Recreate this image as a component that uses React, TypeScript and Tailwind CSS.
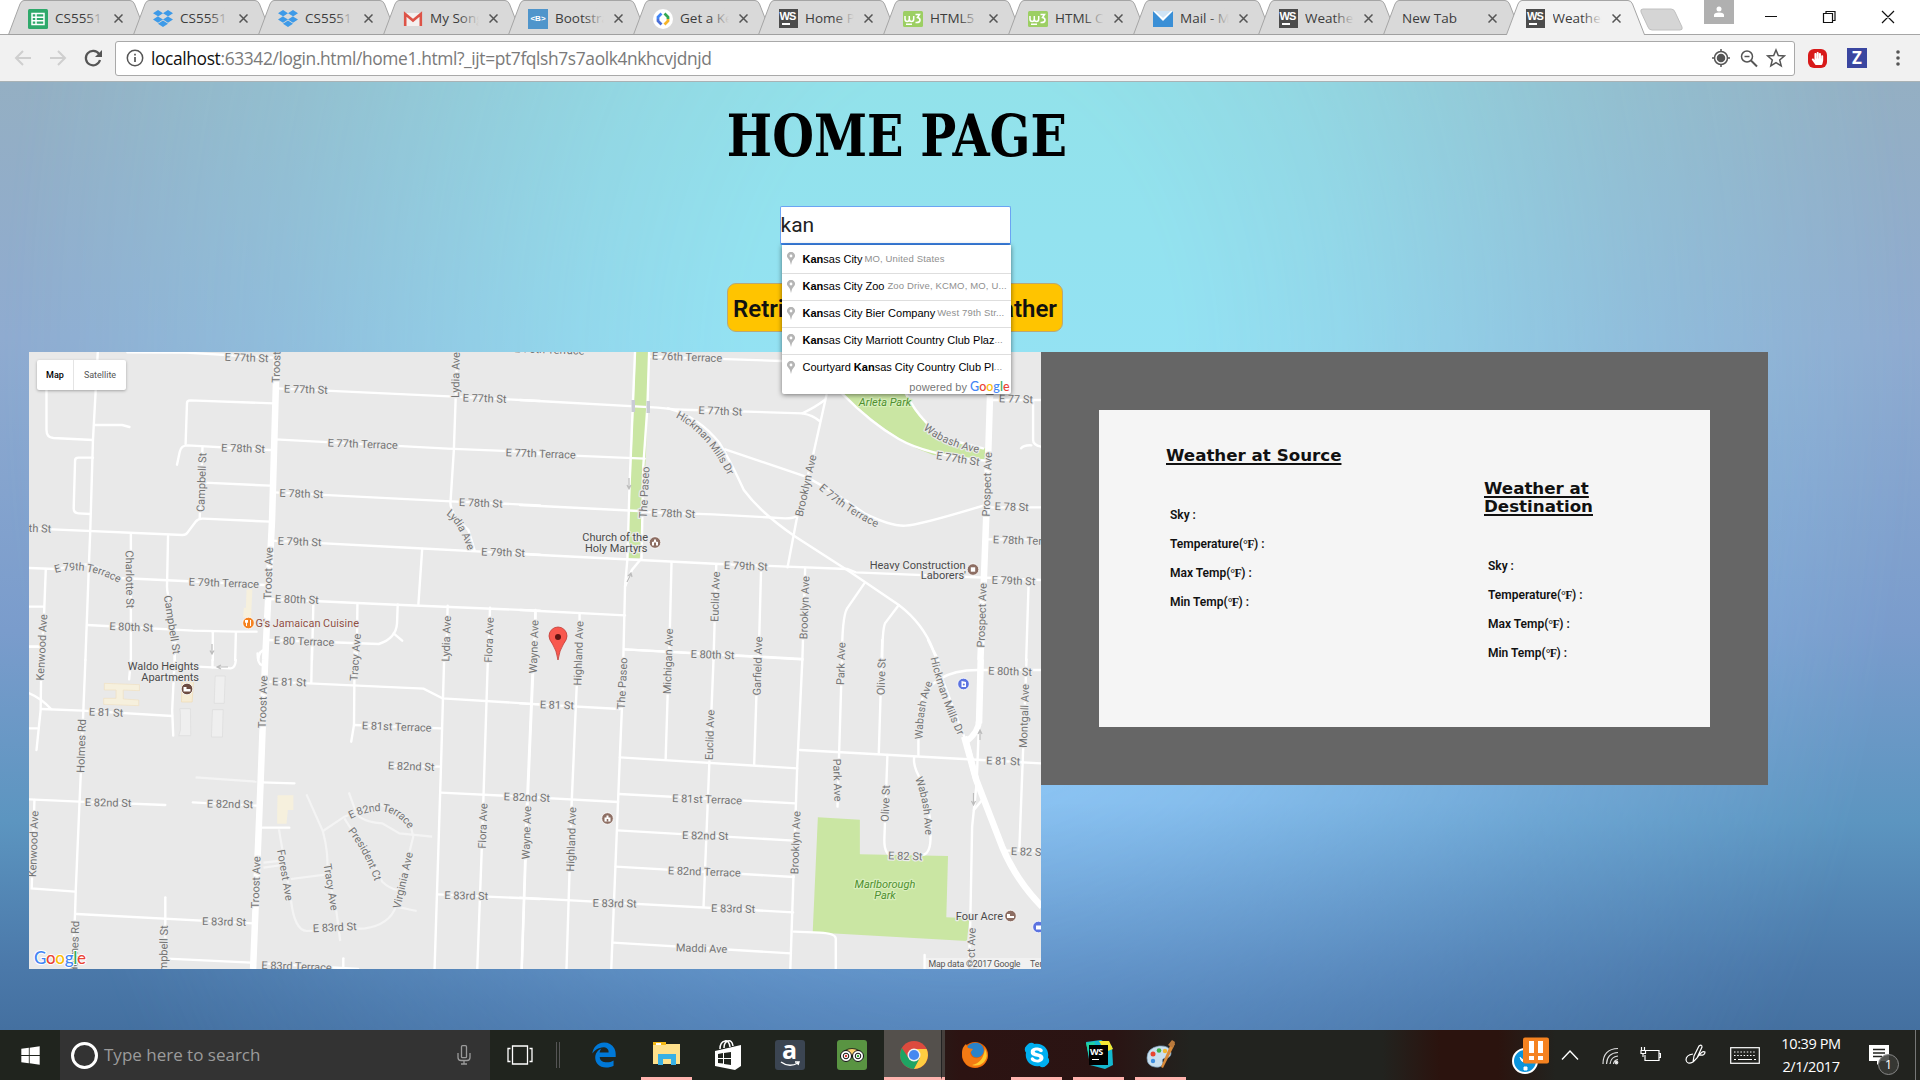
import React from "react";
import { FaDropbox, FaWindows, FaEdgeLegacy, FaSkype, FaHandPaper } from "react-icons/fa";

type P = "A" | "B" | "C" | "D";

/* The map is drawn in four quadrants; each has its own drawing units. */
const ORIGIN: Record<P, [number, number]> = { A: [0, 340], B: [520, 340], C: [0, 640], D: [520, 640] };
const KX = 1 / 2.904;
const KY = 1 / 3;

const roads: Record<P, string[]> = {
  A: [
    "M370,37L540,38L790,53", "M284,36L270,300L262,575L258,680L248,960", "M135,150V270Q135,292 155,294L270,300",
    "M277,255H355L376,261", "M270,353H228Q218,353 218,362L214,505Q214,520 228,520L262,522",
    "M795,190L552,181Q543,181 543,190L539,312", "M514,374L522,335Q526,316 545,316L785,330", "M588,322L580,536",
    "M592,428L785,437", "M85,565L530,585Q540,585 545,577L568,545Q575,535 590,536L785,545", "M380,582V960",
    "M488,588L485,740Q485,760 495,790L508,960", "M85,684L160,687L260,672L350,714L770,735", "M133,687L127,850L118,960",
    "M85,800H127", "M85,920H118", "M253,855L560,872L685,875L745,875", "M618,877V960", "M685,877L683,960",
    "M805,145L1320,170L1568,183", "M800,298L1300,326L1568,337", "M795,457L1310,484L1568,496", "M790,602L1200,624L1568,644",
    "M785,777L1100,792L1568,812", "M1328,36L1318,330L1308,490Q1308,510 1330,540L1360,570L1378,630", "M1226,627L1215,793",
    "M910,793L906,960", "M1038,790L1036,960", "M780,900L1100,912Q1150,895 1153,850L1155,793", "M1143,880L1168,902",
    "M1300,797L1296,960", "M1423,803L1418,960", "M1555,810L1550,960", "M770,930Q752,930 750,960",
  ],
  B: [
    "M334,36L318,440L312,655L305,740L300,960", "M375,36L370,200L358,380L353,655L325,690L305,740",
    "M0,180L400,203Q450,210 500,210L820,220Q860,200 885,180", "M820,220Q850,225 870,243", "M377,50L760,63",
    "M0,340L362,356", "M0,495L345,513", "M353,516L560,523L770,535Q795,535 805,528", "M0,642L580,672L950,687L975,697L1513,720",
    "M430,205Q520,230 580,310Q610,360 650,450Q700,520 800,590L960,697L1100,795Q1170,850 1200,930L1215,960",
    "M596,328L830,410Q920,460 1000,520Q1080,560 1120,557Q1160,555 1345,497", "M890,165L850,350L803,540L777,682",
    "M935,160Q1020,250 1100,297Q1180,345 1350,362", "M1120,160Q1170,260 1250,300L1345,325", "M1370,180H1513",
    "M1490,185V300Q1490,315 1513,320", "M1455,325Q1462,315 1485,316", "M1355,502H1513", "M1350,598H1513",
    "M1477,730L1470,960", "M440,668L433,960", "M570,675L562,960", "M700,690L693,960", "M828,686L820,960",
    "M0,810L305,826", "M45,816V850", "M173,822V850", "M305,928L820,957", "M1000,730L950,805Q935,830 935,960",
    "M1100,795L1060,850Q1052,870 1052,960",
  ],
  C: [
    "M120,60L118,210L106,330", "M85,160Q120,175 148,207", "M85,265H108", "M120,207L240,212L500,228", "M85,20H115",
    "M248,60L235,390L220,750L218,820L210,987", "M380,60L375,118", "M510,0L500,210L503,287", "M617,60V82",
    "M685,60Q683,85 670,85L575,80", "M748,40Q748,72 760,75", "M85,478L230,485L480,495", "M100,480L92,745L218,755",
    "M560,487L745,497", "M760,427L855,430", "M755,563L840,563", "M223,822L735,850", "M480,772V987", "M470,955L730,968",
    "M785,125L1230,146L1285,175L1568,193", "M906,20L904,128", "M1030,20L1028,255L1020,305", "M1028,255L1280,265",
    "M1130,377L1280,380", "M1290,50L1280,400L1262,987", "M1417,50L1400,600L1386,987", "M1548,60L1530,500L1515,987",
    "M1280,458L1568,472", "M1270,763L1568,777", "M765,970L1040,987", "M997,955V987",
  ],
  D: [
    "M820,58L805,380L785,987", "M302,58L290,350L265,987", "M303,28L815,58", "M0,190L290,207", "M290,352L805,385",
    "M288,462L800,490", "M0,470L285,486", "M283,571L795,602", "M278,680L795,711", "M0,773L793,817", "M270,908L787,940",
    "M795,875L870,878Q915,880 917,895V987", "M40,50L22,490L5,987", "M168,60L150,490L135,987", "M432,58L423,357",
    "M562,58L533,800", "M690,58L680,375", "M935,58L922,500", "M1052,0L1042,338", "M1185,0Q1215,60 1220,100L1290,290",
    "M813,330L1513,370", "M1067,345L1058,600Q1058,645 1080,645", "M1157,345V300L1160,200Q1190,90 1330,90H1513",
    "M1145,350Q1140,380 1165,420Q1195,500 1192,600Q1190,645 1165,645", "M1471,58L1450,630", "M1415,632H1513",
    "M1333,250L1326,430L1313,560L1307,880L1303,987", "M1318,510L1342,480", "M1175,945V987",
  ],
};

const mains: Record<P, [string, number][]> = {
  A: [["M804,36L790,540L770,960", 6.5]],
  B: [["M1365,165L1355,500L1347,720L1337,960", 6.5]],
  C: [["M770,60L757,420L735,987", 6.5]],
  D: [
    ["M1338,58L1333,250", 6.5],
    ["M1333,240Q1333,275 1296,305L1325,420", 6],
    ["M1290,290L1325,420L1400,620Q1440,720 1516,800", 6.5],
  ],
};

const soft = [
  "M568,412L745,425", "M810,568L822,640L845,780Q855,870 890,873L1060,865Q1130,855 1150,800L1200,590Q1190,540 1180,530",
  "M890,463L938,575Q955,640 950,700L975,800L988,903", "M938,573L1000,530L1100,490L1190,540",
  "M1013,457L1035,520Q1050,545 1110,550L1160,580L1255,590", "M1000,535L1090,680L1110,725Q1130,745 1155,750",
  "M845,717L950,703", "M765,668L820,662", "M765,683L820,675", "M1150,800L1210,813",
];

type L = [P, number, number, string, number];
const labels: L[] = [
  ["A", 716, 53, "E 77th St", 2], ["A", 803, 50, "Troost Ave", -88], ["A", 888, 148, "E 77th St", 2], ["A", 1323, 105, "Lydia Ave", -89],
  ["A", 1407, 175, "E 77th St", 2], ["A", 706, 325, "E 78th St", 2], ["A", 1053, 312, "E 77th Terrace", 2],
  ["A", 585, 427, "Campbell St", -88], ["A", 875, 461, "E 78th St", 2], ["A", 1396, 489, "E 78th St", 2],
  ["A", 85, 564, "E 79th St", 2], ["A", 870, 605, "E 79th St", 2], ["A", 1461, 637, "E 79th St", 2],
  ["A", 377, 718, "Charlotte St", 89], ["A", 779, 700, "Troost Ave", -88], ["A", 650, 729, "E 79th Terrace", 2],
  ["A", 862, 778, "E 80th St", 2], ["A", 381, 861, "E 80th St", 2], ["A", 500, 854, "Campbell St", 81],
  ["A", 883, 904, "E 80 Terrace", 2], ["C", 121, 22, "Kenwood Ave", -87], ["C", 1032, 52, "Tracy Ave", -86],
  ["C", 1296, -4, "Lydia Ave", -88], ["C", 1420, 0, "Flora Ave", -88], ["D", 40, 20, "Wayne Ave", -88], ["D", 170, 40, "Highland Ave", -88],
  ["B", 485, 51, "E 76th Terrace", 2], ["B", 85, 29, "E 76th Terrace", 2], ["B", 582, 213, "E 77th St", 2],
  ["B", 60, 341, "E 77th Terrace", 2], ["B", 361, 457, "The Paseo", -87], ["B", 445, 520, "E 78th St", 2],
  ["B", 830, 437, "Brooklyn Ave", -77], ["B", 1356, 433, "Prospect Ave", -88], ["B", 1366, 102, "Prospect", -88],
  ["B", 1428, 500, "E 78 St", 2], ["B", 1450, 601, "E 78th Terr", 2], ["B", 1272, 356, "E 77th St", 9], ["B", 1440, 177, "E 77 St", 2],
  ["B", 656, 678, "E 79th St", 2], ["B", 1433, 722, "E 79th St", 2], ["B", 567, 770, "Euclid Ave", -88],
  ["B", 826, 803, "Brooklyn Ave", -88], ["B", 1341, 826, "Prospect Ave", -88], ["D", 559, 44, "E 80th St", 2],
  ["D", 430, 64, "Michigan Ave", -88], ["D", 690, 78, "Garfield Ave", -88], ["D", 297, 130, "The Paseo", -87],
  ["D", 932, 71, "Park Ave", -88], ["D", 1049, 110, "Olive St", -88], ["D", 1423, 94, "E 80th St", 2],
  ["C", 840, 126, "E 81 St", 2], ["C", 308, 217, "E 81 St", 2], ["C", 763, 186, "Troost Ave", -88],
  ["C", 236, 318, "Holmes Rd", -88], ["C", 1152, 260, "E 81st Terrace", 2], ["C", 1194, 379, "E 82nd St", 2],
  ["C", 314, 488, "E 82nd St", 1], ["C", 668, 492, "E 82nd St", 1], ["C", 1530, 472, "E 82nd St", 2],
  ["C", 97, 612, "Kenwood Ave", -88], ["C", 1402, 558, "Flora Ave", -88], ["C", 1529, 578, "Wayne Ave", -88],
  ["C", 743, 727, "Troost Ave", -88], ["C", 828, 705, "Forest Ave", 80], ["C", 961, 741, "Tracy Ave", 81],
  ["C", 1170, 721, "Virginia Ave", -77], ["C", 1354, 767, "E 83rd St", 1], ["C", 651, 845, "E 83rd St", 1],
  ["C", 972, 862, "E 83rd St", -3], ["C", 216, 923, "Holmes Rd", -88], ["C", 475, 945, "Campbell St", -89],
  ["C", 861, 979, "E 83rd Terrace", 2], ["D", 107, 195, "E 81 St", 2], ["D", 551, 285, "Euclid Ave", -88],
  ["D", 543, 478, "E 81st Terrace", 2], ["D", 538, 587, "E 82nd St", 1], ["D", 149, 598, "Highland Ave", -88],
  ["D", 800, 608, "Brooklyn Ave", -88], ["D", 535, 695, "E 82nd Terrace", 2], ["D", 275, 790, "E 83rd St", 1],
  ["D", 619, 806, "E 83rd St", 1], ["D", 527, 925, "Maddi Ave", 2], ["D", 922, 420, "Park Ave", 88],
  ["D", 1061, 490, "Olive St", -88], ["D", 1464, 228, "Montgall Ave", -88], ["D", 1403, 363, "E 81 St", 2],
  ["D", 1119, 648, "E 82 St", 2], ["D", 1475, 635, "E 82 St", 2], ["D", 1309, 960, "Prospect Ave", -88],
];

const curved: [P, string, string][] = [
  ["A", "M158,688Q255,660 360,725", "E 79th Terrace"],
  ["A", "M1302,515Q1345,545 1372,640", "Lydia Ave"],
  ["B", "M457,222Q550,270 618,410", "Hickman Mills Dr"],
  ["B", "M874,438Q950,510 1056,560", "E 77th Terrace"],
  ["B", "M1178,258Q1235,310 1345,330", "Wabash Ave"],
  ["D", "M1203,52Q1228,170 1290,300", "Hickman Mills Dr"],
  ["D", "M1158,298Q1158,190 1192,115", "Wabash Ave"],
  ["D", "M1157,412Q1190,490 1186,600", "Wabash Ave"],
  ["C", "M1013,527Q1140,462 1200,568", "E 82nd Terrace"],
  ["C", "M1018,566Q1070,630 1100,725", "President Ct"],
];

const GOOGLE = [["G", "#4285f4"], ["o", "#ea4335"], ["o", "#fbbc05"], ["g", "#4285f4"], ["l", "#34a853"], ["e", "#ea4335"]];

function pt(p: P, x: number, y: number): [number, number] {
  return [ORIGIN[p][0] + x * KX, ORIGIN[p][1] + y * KY];
}

function Quad({ p, children }: { p: P; children: React.ReactNode }) {
  return <g transform={`translate(${ORIGIN[p][0]} ${ORIGIN[p][1]}) scale(${KX} ${KY})`}>{children}</g>;
}

function Poi({ x, y, color, children }: { x: number; y: number; color: string; children?: React.ReactNode }) {
  return (
    <g transform={`translate(${x} ${y})`}>
      <circle r="5.8" fill={color} stroke="#fff" strokeWidth="0.8" />
      {children ?? <path d="M-2.5,2.5V-1.5H2.5V2.5Z" fill="#fff" />}
    </g>
  );
}

function MapView() {
  const quads: P[] = ["A", "B", "C", "D"];
  const ns = { vectorEffect: "non-scaling-stroke" as const };
  const halo = { stroke: "#ebebeb", strokeWidth: 2.4, paintOrder: "stroke" as const, strokeLinejoin: "round" as const };
  return (
    <svg className="block h-[617px] w-[1012px] bg-[#e9e9e9] font-[Roboto,sans-serif]" viewBox="29 352 1012 617">
      <Quad p="B">
        <path d="M337,30L373,30L366,340L354,560L348,655L312,655Z" fill="#cae6a3" />
        <path d="M935,160Q1050,270 1150,325L1200,345L1352,358V325L1240,300Q1150,240 1120,160Z" fill="#cae6a3" />
      </Quad>
      <Quad p="D">
        <path d="M865,532L987,539V643L1243,648L1238,832L1305,835L1298,903L850,877Z" fill="#cae6a3" />
      </Quad>
      <Quad p="A">
        <path d="M716,748H733L729,832H706L708,803H714Z" fill="#f6f0dd" />
      </Quad>
      <Quad p="C">
        <path d="M303,130L405,134V152L358,150V177L403,180V197L301,193V175H337V150H303Z" fill="#f6f0dd" stroke="#f0e0c0" strokeWidth="2" />
        <path d="M528,125H562L558,186H527Z" fill="#f6ecd5" stroke="#f0dcb4" strokeWidth="2" />
        <path d="M806,466H852V510H836L832,551H805V510Z" fill="#f6f0dd" />
        <path d="M625,108H654L651,190H622ZM617,209H648L646,291H614ZM522,206H553L554,287H519L524,270V220Z" fill="#efefef" stroke="#dcdcdc" strokeWidth="2" />
        {soft.map((d) => <path key={d} d={d} fill="none" stroke="#f4f4f4" strokeWidth="2.2" {...ns} />)}
      </Quad>
      {quads.map((p) => (
        <Quad key={p} p={p}>
          {roads[p].map((d) => <path key={d} d={d} fill="none" stroke="#fff" strokeWidth="2.4" strokeLinecap="round" {...ns} />)}
          {mains[p].map(([d, w]) => <path key={d} d={d} fill="none" stroke="#fff" strokeWidth={w} {...ns} />)}
        </Quad>
      ))}
      <g fill="#c9cbd6">
        <rect x="631.5" y="400" width="3.5" height="12" /><rect x="646.5" y="401" width="3.5" height="12" />
      </g>
      <g stroke="#bcbcbc" strokeWidth="1.2" fill="none">
        <path d="M212,644V653M210,650.500L212,654L214,650.500M228,667H218M221,665L217,667L221,669" />
        <path d="M629,478V488M627,485L629,489L631,485M627,582L631,574M628,576L631,573L632,577" />
        <path d="M980,740V731M978,734L980,730L982,734M973.500,793V804M971.500,801L973.500,805L975.500,801" />
      </g>
      <g fontSize="11" fill="#747474">
        {labels.map(([p, x, y, t, a], i) => {
          const [cx, cy] = pt(p, x, y);
          return <text key={i} transform={`translate(${cx} ${cy}) rotate(${a})`} textAnchor="middle" dy="3.8" {...halo}>{t}</text>;
        })}
        {curved.map(([p, d, t], i) => {
          const abs = d.replace(/([\d.]+),([\d.]+)/g, (_, a, b) => pt(p, Number(a), Number(b)).map((n) => n.toFixed(1)).join(","));
          return (
            <g key={i}>
              <path id={`curve${i}`} d={abs} fill="none" />
              <text dy="3.8" fontSize="10.8" {...halo}><textPath href={`#curve${i}`}>{t}</textPath></text>
            </g>
          );
        })}
      </g>
      <g fontSize="11" fill="#4b4b4b" {...halo}>
        <text x="648" y="540.500" textAnchor="end">Church of the</text>
        <text x="647.500" y="552" textAnchor="end">Holy Martyrs</text>
        <text x="965.500" y="568.500" textAnchor="end">Heavy Construction</text>
        <text x="966" y="579" textAnchor="end">Laborers'</text>
        <text x="199" y="669.500" textAnchor="end">Waldo Heights</text>
        <text x="199" y="680.500" textAnchor="end">Apartments</text>
        <text x="1003" y="919.500" textAnchor="end">Four Acre</text>
        <text x="255.500" y="627" fill="#8f4f44" textLength="103.500">G's Jamaican Cuisine</text>
        <g fill="#4f8f2f" fontStyle="italic" stroke="#d9efbd">
          <text x="885" y="406" textAnchor="middle">Arleta Park</text>
          <text x="885" y="887.500" textAnchor="middle">Marlborough</text>
          <text x="885" y="898.500" textAnchor="middle">Park</text>
        </g>
      </g>
      <Poi x={248.500} y={623} color="#f58220"><path d="M-2,-3V3M2,-3V3M-3,-3V-0.500H-1V-3" stroke="#fff" fill="none" /></Poi>
      <Poi x={655} y={542.500} color="#8d6e63"><path d="M-3,3V-0.500L-1,-1V-3H1V-1L3,-0.500V3H1V0H-1V3Z" fill="#fff" /></Poi>
      <Poi x={973} y={569.500} color="#8d6e63"><path d="M-2.200,-2.200H2.200V2.200H-2.200Z" fill="#fff" /></Poi>
      <Poi x={187} y={689} color="#6d4c41"><path d="M-3.500,2.500V-2H-0.500V0H3.500V2.500Z" fill="#fff" /></Poi>
      <Poi x={607.500} y={818.500} color="#8d6e63"><path d="M-3,3V-1H-1V-3H1V-1H3V3Z" fill="#fff" /><path d="M-0.800,3V0.500H0.800V3Z" fill="#8d6e63" /></Poi>
      <Poi x={1010.500} y={916} color="#8d6e63"><path d="M-3.500,2V-2H-0.500V0H3.500V2Z" fill="#fff" /></Poi>
      <Poi x={963.500} y={684} color="#5c73e0"><path d="M-2,3V-3L2.500,-2V3Z" fill="#fff" /><circle cx="0.300" cy="0.500" r="1" fill="#5c73e0" /></Poi>
      <Poi x={1038.500} y={927} color="#5c73e0" />
      <g>
        <path d="M558,660Q556.500,650 552.500,644Q549,639.500 549,636A9,9 0 0 1 567,636Q567,639.500 563.500,644Q559.500,650 558,660Z" fill="#f8584e" stroke="#c23a34" strokeWidth="0.8" />
        <circle cx="558" cy="637" r="3" fill="#5f1411" />
      </g>
      <text x="34" y="963.500" fontSize="17" fontFamily="Lato" stroke="#fff" strokeWidth="2" paintOrder="stroke" textLength="52">
        {GOOGLE.map(([c, f], i) => <tspan key={i} fill={f} fontWeight="500">{c}</tspan>)}
      </text>
      <rect x="926" y="958" width="115" height="11" fill="#f3f3f3" opacity="0.8" />
      <g fontSize="8.800" fill="#555">
        <text x="928.500" y="966.500" textLength="92">Map data ©2017 Google</text>
        <text x="1030" y="966.500">Terms</text>
      </g>
    </svg>
  );
}

function GoogleWord({ className }: { className: string }) {
  return <span className={className}>{GOOGLE.map(([c, f], i) => <span key={i} style={{ color: f }}>{c}</span>)}</span>;
}

function Favicon({ kind }: { kind: string }) {
  if (kind === "sheet")
    return (
      <svg className="h-5 w-5" viewBox="0 0 20 20"><rect width="20" height="20" rx="1.500" fill="#2fa96b" /><path d="M4,4.500H16V15.500H4ZM4,8.200H16M4,11.800H16M8,4.500V15.500" stroke="#fff" strokeWidth="1.500" fill="none" /></svg>
    );
  if (kind === "dropbox") return <FaDropbox className="h-[21px] w-[21px] text-[#3d9ae8]" />;
  if (kind === "gmail")
    return (
      <svg className="h-5 w-5" viewBox="0 0 20 20"><path d="M1,4H19V17H1Z" fill="#f4f0ef" /><path d="M2.200,17V5L10,11.500L17.800,5V17" fill="none" stroke="#dd5347" strokeWidth="2.600" /></svg>
    );
  if (kind === "boot")
    return <span className="flex h-5 w-5 items-center justify-center bg-[#4f95cb] font-['Liberation_Sans',sans-serif] text-[8px] font-bold text-white">&lt;B&gt;</span>;
  if (kind === "dev")
    return (
      <svg className="h-5 w-5" viewBox="0 0 20 20"><circle cx="10" cy="10" r="10" fill="#fff" /><g fill="none" strokeWidth="2.800"><path d="M8.500,4.500L5,8V10" stroke="#4285f4" /><path d="M5,10V12L8.500,15.500" stroke="#4a6fd8" /><path d="M11.500,4.500L15,8V10" stroke="#34a853" /><path d="M15,10V12L11.500,15.500" stroke="#f7b529" /></g></svg>
    );
  if (kind === "ws")
    return (
      <span className="flex h-[19px] w-[19px] flex-col bg-[#4c4c4c] pl-px pt-px font-['Liberation_Sans',sans-serif] text-[11px] font-bold leading-[12px] tracking-[-1px] text-white">
        WS<span className="ml-0.5 mt-px h-0.5 w-2 bg-white" />
      </span>
    );
  if (kind === "w3")
    return (
      <svg className="h-4 w-5" viewBox="0 0 20 16"><rect width="20" height="16" rx="1.500" fill="#9ccf63" /><path d="M2,5V8Q2,10.500 4.200,10.500Q6.300,10.500 6.300,8V5M6.300,8Q6.300,10.500 8.500,10.500Q10.700,10.500 10.700,8V5M12.500,3.500H16.500L14.500,6.500Q17.300,7 17,9.500Q16.500,12 12.500,11.500M3,13.300H9" fill="none" stroke="#fff" strokeWidth="1.500" /></svg>
    );
  if (kind === "mail")
    return <svg className="h-4 w-5" viewBox="0 0 20 16"><rect width="20" height="16" fill="#3a8fd6" /><path d="M0,0L10,10L20,0Z" fill="#fff" /><path d="M2,0L10,7L18,0Z" fill="#3a8fd6" opacity=".25" /></svg>;
  return null;
}

const tabs: [string, string][] = [
  ["sheet", "CS5551"], ["dropbox", "CS5551"], ["dropbox", "CS5551"], ["gmail", "My Song"], ["boot", "Bootstra"], ["dev", "Get a Key"],
  ["ws", "Home P"], ["w3", "HTML5 "], ["w3", "HTML Co"], ["mail", "Mail - M"], ["ws", "Weather"], ["", "New Tab"], ["ws", "Weather"],
];

function Tab({ kind, title, active }: { kind: string; title: string; active: boolean }) {
  const fill = active ? "#f1f1f1" : "#d9d9d9";
  const fade = active ? "to-[#f1f1f1]" : "to-[#d9d9d9]";
  return (
    <div className={kind ? "relative -mr-[15px] flex h-[35px] w-[140px] shrink-0 items-center pl-[20px]" : "relative -mr-[17.500px] flex h-[35px] w-[140px] shrink-0 items-center pl-[19px]"}>
      <svg className="absolute inset-0 h-full w-full" viewBox="0 0 140 35">
        <path d="M0,36L12,4Q13.500,0.500 16,0.500H122Q125,0.500 126.500,4L139,36" fill={fill} stroke="#a5a5a5" />
        {!active && <path d="M0,34.500H140" stroke="#a0a0a0" />}
      </svg>
      <div className="relative flex h-full w-full items-center pt-[2px]">
        {kind && <span className="mr-[7px] flex w-5 justify-center"><Favicon kind={kind} /></span>}
        <span className={kind ? "relative w-[49px] overflow-hidden whitespace-nowrap text-[13.5px] text-[#3c3c3c]" : "w-[76px] whitespace-nowrap text-[13.5px] text-[#3c3c3c]"}>
          {title}
          {kind && <span className={`absolute inset-y-0 right-0 w-5 bg-linear-to-r from-transparent ${fade}`} />}
        </span>
        <svg className="ml-[10px] h-[9px] w-[9px]" viewBox="0 0 9 9"><path d="M0.500,0.500L8.500,8.500M8.500,0.500L0.500,8.500" stroke="#555" strokeWidth="1.500" /></svg>
      </div>
    </div>
  );
}

function Browser() {
  return (
    <header className="font-['Open_Sans',sans-serif]">
      <div className="flex h-[35px] border-b border-[#a6a6a6] bg-white pl-[8px]">
        {tabs.map(([k, t], i) => <Tab key={i} kind={k} title={t} active={i === 12} />)}
        <svg className="ml-[9px] mt-[8px] h-[23px] w-[44px] shrink-0" viewBox="0 0 44 23"><path d="M3,1H31Q34,1 35,4L42,19Q43,22 40,22H12Q9,22 8,19L1,4Q0,1 3,1Z" fill="#d5d5d5" stroke="#c0c0c0" /></svg>
        <div className="ml-[20px] flex h-[24px] w-[30px] shrink-0 items-center justify-center bg-[#b0b0b0]">
          <svg className="h-3 w-3" viewBox="0 0 12 12"><circle cx="6" cy="3" r="2.500" fill="#fff" /><path d="M1,11V9Q1,6.500 6,6.500Q11,6.500 11,9V11Z" fill="#fff" /></svg>
        </div>
        <svg className="ml-[30px] h-[34px] w-[140px] shrink-0" viewBox="0 0 140 34" fill="none" stroke="#111" strokeWidth="1.200">
          <path d="M1,16.500H13M59.500,13.500H68.500V22.500H59.500ZM62,13.500V11.500H71V20.500H68.500M118,11L130,23M130,11L118,23" />
        </svg>
      </div>
      <div className="flex h-[47px] items-center border-b border-[#a9b2b5] bg-[#f1f1f1] pl-[14px]">
        <svg className="h-[24px] w-[90px]" viewBox="0 0 90 24" fill="none" strokeWidth="2">
          <path d="M17,12H2M9,5L2,12L9,19M36,12H51M44,5L51,12L44,19" stroke="#cfcfcf" />
          <path d="M85,8A7.200,7.200 0 1 0 86,14" stroke="#555" strokeWidth="2.200" /><path d="M88,4V11H81Z" fill="#555" />
        </svg>
        <div className="ml-[11px] flex h-[35px] w-[1680px] items-center rounded-[3px] border border-[#a9a9a9] bg-white pl-[10px] pr-[8px]">
          <svg className="h-[18px] w-[18px]" viewBox="0 0 18 18"><circle cx="9" cy="9" r="7.700" fill="none" stroke="#555" strokeWidth="1.500" /><path d="M9,8V13M9,4.800V6.500" stroke="#555" strokeWidth="1.700" /></svg>
          <span className="ml-[7px] whitespace-nowrap text-[17.400px] tracking-[-0.380px] text-[#7a7a7a]"><span className="text-[#111]">localhost</span>:63342/login.html/home1.html?_ijt=pt7fqlsh7s7aolk4nkhcvjdnjd</span>
          <svg className="ml-auto h-[22px] w-[76px]" viewBox="0 0 76 22" fill="none" stroke="#555" strokeWidth="1.500">
            <circle cx="11" cy="11" r="6.500" /><circle cx="11" cy="11" r="3.500" fill="#555" /><path d="M11,2V5M11,17V20M2,11H5M17,11H20" />
            <circle cx="37" cy="9.500" r="5.500" /><path d="M41,13.500L47,19.500" strokeWidth="2" /><path d="M34.500,9.500H39.500" />
            <path d="M66,3L68.300,8.600L74.300,9L69.700,12.900L71.200,18.800L66,15.600L60.800,18.800L62.300,12.900L57.700,9L63.700,8.600Z" />
          </svg>
        </div>
        <span className="ml-[13px] flex h-[19px] w-[19px] items-center justify-center rounded-[6px] bg-[#d81a1a]"><FaHandPaper className="h-[13px] w-[13px] text-white" /></span>
        <span className="ml-[20px] flex h-[20px] w-[20px] items-center justify-center bg-[#3a46a0] text-[17px] font-bold text-white">Z</span>
        <svg className="ml-[28px] h-[18px] w-[6px]" viewBox="0 0 6 18" fill="#555"><circle cx="3" cy="3" r="1.800" /><circle cx="3" cy="9" r="1.800" /><circle cx="3" cy="15" r="1.800" /></svg>
      </div>
    </header>
  );
}

const suggestions: { pre?: string; bold: string; rest: string; minor: string; gap: string }[] = [
  { bold: "Kan", rest: "sas City", minor: "MO, United States", gap: "ml-[2px]" },
  { bold: "Kan", rest: "sas City Zoo", minor: "Zoo Drive, KCMO, MO, U...", gap: "ml-[3px]" },
  { bold: "Kan", rest: "sas City Bier Company", minor: "West 79th Str...", gap: "ml-[2px]" },
  { bold: "Kan", rest: "sas City Marriott Country Club Plaz", minor: "...", gap: "" },
  { pre: "Courtyard ", bold: "Kan", rest: "sas City Country Club Pl", minor: "...", gap: "" },
];

function Suggestions() {
  return (
    <div className="absolute left-[1px] top-[38px] z-10 h-[149px] w-[229px] overflow-hidden rounded-b-[2px] bg-white font-['Liberation_Sans',sans-serif] shadow-[0_1px_5px_rgba(0,0,0,0.5)]">
      {suggestions.map((s, i) => (
        <div key={i} className={i ? "flex h-[27px] items-center whitespace-nowrap border-t border-[#dedede] pl-[5px] text-[11px] text-black" : "flex h-[27.500px] items-center whitespace-nowrap pl-[5px] text-[11px] text-black"}>
          <svg className="mr-[8px] h-[13px] w-[8px] shrink-0" viewBox="0 0 8 13"><path d="M4,13Q3.500,8.500 1.200,6.500A3.900,3.900 0 1 1 6.800,6.500Q4.500,8.500 4,13Z" fill="#b5b5b5" /><circle cx="4" cy="4" r="1.400" fill="#fff" /></svg>
          <span className="whitespace-pre">{s.pre}<b>{s.bold}</b>{s.rest}</span>
          <span className={`${s.gap} text-[9.5px] tracking-[0.15px] text-[#8f8f8f]`}>{s.minor}</span>
        </div>
      ))}
      <div className="flex h-[13px] items-center justify-end pr-px text-[11px] text-[#777]">
        <span className="tracking-[0.1px]">powered by</span><GoogleWord className="ml-[3px] font-['Lato',sans-serif] text-[12.500px] font-medium" />
      </div>
    </div>
  );
}

function Weather({ title, className }: { title: React.ReactNode; className: string }) {
  return (
    <section className={className}>
      <h2 className="font-['DejaVu_Sans',sans-serif] text-[16.700px] font-bold leading-[18px] underline decoration-[1.500px] underline-offset-[2px]">{title}</h2>
      <ul className="mt-[37px] flex flex-col pl-[4px] font-[Roboto,sans-serif] text-[12px] font-semibold leading-[29px]">
        <li>Sky :</li>
        {["Temperature", "Max Temp", "Min Temp"].map((t) => (
          <li key={t}>{t}(<span className="font-['Liberation_Serif',serif] tracking-[-0.600px]">°F</span>) :</li>
        ))}
      </ul>
    </section>
  );
}

function Page() {
  return (
    <main className="relative h-[948px] bg-[linear-gradient(to_bottom,#94afc3_0%,#8fabd0_27%,#7a9ccc_58%,#5c95c0_78%,#4b79aa_93%,#4470a0_100%)]">
      <div className="absolute inset-0 bg-[linear-gradient(to_bottom,#92e2ea_0%,#94e2f4_32%,#90c8f8_76%,#6698d0_97%,#6293cb_100%)] mask-[radial-gradient(ellipse_50%_140%_at_50%_30%,#000_0%,#000_22%,rgba(0,0,0,.8)_40%,rgba(0,0,0,.35)_70%,transparent_100%)]" />
      <div className="relative flex h-full flex-col">
        <div className="flex w-[1790px] flex-col items-center">
          <h1 className="ml-[3px] mt-[24px] h-[60px] origin-center whitespace-nowrap font-['DejaVu_Serif_Condensed','DejaVu_Serif',serif] text-[57px] font-bold leading-[60px] text-black scale-x-[0.935]">HOME PAGE</h1>
          <div className="relative mt-[40px] flex h-[39px] w-[231px] items-center rounded-[2px] border border-b-2 border-[#6ba4f3] border-b-[#3d84e8] bg-white pt-[2px] font-[Roboto,sans-serif] text-[21px] text-[#222]">
            kan
            <Suggestions />
          </div>
          <button className="mt-[38px] flex h-[49px] w-[336px] items-center justify-between rounded-[9px] border border-[#b8a878] bg-[#ffc400] px-[5px] pt-[2px] font-[Roboto,sans-serif] text-[24px] font-semibold text-[#111]">
            <span>Retrieve</span><span>Route &amp;</span><span>Weather</span>
          </button>
        </div>
        <div className="mt-[20px] flex items-start pl-[29px]">
          <div className="relative h-[617px] w-[1012px] overflow-hidden">
            <MapView />
            <div className="absolute left-[8px] top-[8px] flex h-[30px] rounded-[2px] bg-white font-[Roboto,sans-serif] text-[9px] leading-[30px] shadow-[0_1px_3px_rgba(0,0,0,0.3)]">
              <span className="w-[37px] border-r border-[#e4e4e4] text-center font-medium text-black">Map</span>
              <span className="w-[52px] text-center text-[#565656]">Satellite</span>
            </div>
          </div>
          <div className="h-[433px] w-[727px] bg-[#666] px-[58px] pt-[58px]">
            <div className="flex h-[317px] w-[611px] items-start bg-[#f5f5f5] text-[#111]">
              <Weather title="Weather at Source" className="ml-[67px] mt-[36px] w-[318px]" />
              <Weather title={<>Weather at<br />Destination</>} className="mt-[69px]" />
            </div>
          </div>
        </div>
      </div>
    </main>
  );
}

function Slot({ className, children }: { className: string; children: React.ReactNode }) {
  return <div className={`flex h-[50px] shrink-0 items-center justify-center border-b-[3px] pt-[2px] ${className}`}>{children}</div>;
}

function Taskbar() {
  return (
    <footer className="flex h-[50px] bg-[linear-gradient(to_right,#20241e_0%,#20241e_46%,#2c1312_50%,#2a1413_58%,#22231f_62%,#22231f_72%,#2b130e_75%,#2b130e_78%,#22231f_81%)] font-['Open_Sans',sans-serif]">
      <div className="flex w-[60px] items-center justify-center"><FaWindows className="h-[21px] w-[21px] text-white" /></div>
      <div className="flex w-[430px] items-center bg-[#333] pl-[11px] pr-[19px]">
        <span className="h-[27px] w-[27px] rounded-full border-[3.500px] border-white" />
        <span className="ml-[6px] text-[17px] text-[#9b9b9b]">Type here to search</span>
        <svg className="ml-auto h-[20px] w-[14px]" viewBox="0 0 14 20" fill="none" stroke="#9b9b9b" strokeWidth="1.300"><rect x="4.500" y="0.700" width="5" height="12" rx="1" /><path d="M1,8V12.500Q1,15.500 4,15.500H10Q13,15.500 13,12.500V8M7,15.500V19M4,19H10" /></svg>
      </div>
      <svg className="ml-[17px] mt-[15px] h-[20px] w-[26px]" viewBox="0 0 26 20" fill="none" stroke="#fff" strokeWidth="1.300"><path d="M5.500,1H20.500V19H5.500ZM3.500,3.500H1V16.500H3.500M22.500,3.500H25V16.500H22.500" /></svg>
      <div className="ml-[23px] mt-[12px] h-[26px] w-[4px] border-x border-[#555]" />
      <Slot className="ml-[18px] w-[52px] border-transparent"><FaEdgeLegacy className="h-[26px] w-[26px] text-[#0078d7]" /></Slot>
      <Slot className="ml-[11px] w-[51px] border-[#ffb3ae]">
        <svg className="mb-[3px] h-[24px] w-[28px]" viewBox="0 0 28 24"><path d="M0,1H13V3H27V23H0Z" fill="#fee08b" /><path d="M0,1H13V4H0Z" fill="#f5b914" /><rect x="3" y="2" width="5" height="2" fill="#fff" /><path d="M5,13H23V24H18V18H10V24H5Z" fill="#38b0e5" /></svg>
      </Slot>
      <Slot className="ml-[11px] w-[51px] border-transparent">
        <svg className="h-[30px] w-[27px]" viewBox="0 0 27 30"><path d="M0,11L26,5V26L20,30L0,26Z" fill="#fff" /><path d="M5,9Q5,2 10,1Q14,0 15,7M9,8Q9,2 13,1Q17,0 18,6" fill="none" stroke="#fff" strokeWidth="1.500" /><path d="M3,14L8,13V18H3ZM9,13L16,12V18H9ZM3,19H8V23.500L3,23ZM9,19H16V25L9,24Z" fill="#20241e" /></svg>
      </Slot>
      <Slot className="ml-[10px] w-[51px] border-transparent">
        <span className="relative flex h-[30px] w-[30px] justify-center rounded-[3px] bg-[#3b4552] text-[25px] font-bold leading-[18px] text-white">a
          <svg className="absolute bottom-[3px] left-[5px] h-[6px] w-[20px]" viewBox="0 0 20 6"><path d="M1,1Q9,7 18,2M15,1H19L18,4" fill="none" stroke="#fff" strokeWidth="1.400" /></svg>
        </span>
      </Slot>
      <Slot className="ml-[11px] w-[51px] border-transparent">
        <svg className="h-[30px] w-[30px]" viewBox="0 0 30 30"><rect width="30" height="30" rx="3" fill="#599442" /><path d="M7,11Q15,6 23,11L15,17Z" fill="#fccf6e" stroke="#111" strokeWidth=".8" />{[9, 21].map((x) => <g key={x}><circle cx={x} cy="16" r="5.500" fill="#fff" stroke="#111" /><circle cx={x} cy="16" r="2.800" fill="none" stroke="#111" /><circle cx={x} cy="16" r="1.200" fill={x === 9 ? "#d33" : "#3a3"} /></g>)}</svg>
      </Slot>
      <Slot className="ml-[7px] w-[57px] border-[#ffb3ae] bg-[#54504c] pl-[2px]">
        <svg className="h-[28px] w-[28px]" viewBox="-14 -14 28 28"><circle r="14" fill="#dd4b3e" /><path d="M-12.100,-7A14,14 0 0 0 0,14L6,3.500L-5.500,3Z" fill="#1fa463" /><path d="M0,14A14,14 0 0 0 12.600,-6H0L5.700,3.200Z" fill="#ffcd41" /><circle r="6.500" fill="#f1f1f1" /><circle r="5.100" fill="#4688f1" /></svg>
      </Slot>
      <Slot className="w-[4px] border-l border-[#ffb3ae] border-l-[#222] bg-[#453f3c]">{null}</Slot>
      <Slot className="ml-[4px] w-[51px] border-transparent">
        <svg className="h-[28px] w-[28px]" viewBox="0 0 28 28"><circle cx="14" cy="14" r="13" fill="#e66000" /><path d="M6,6Q10,1 17,2Q23,4 23,11Q20,18 13,16Q9,13 10,9Z" fill="#2a83c9" /><path d="M1,12Q1,6 5,3L7,7L12,8L9,12Q10,18 17,17Q24,15 23,5Q30,14 24,22Q17,29 8,25Q1,21 1,12Z" fill="#f27a14" /><path d="M24,8Q28,15 23,21Q18,26 11,24Q22,22 24,8Z" fill="#ffcb2d" /></svg>
      </Slot>
      <Slot className="ml-[11px] w-[51px] border-[#ffb3ae]"><FaSkype className="h-[28px] w-[28px] rounded-full bg-[radial-gradient(#fff_50%,transparent_52%)] text-[#00aff0]" /></Slot>
      <Slot className="ml-[11px] w-[51px] border-[#ffb3ae]">
        <span className="relative flex h-[29px] w-[28px] items-center justify-center">
          <svg className="absolute inset-0 h-full w-full" viewBox="0 0 28 29"><path d="M1,2L16,0L27,6L28,25L20,29L5,25Z" fill="#14b8cf" /><path d="M14,1H24L28,9L20,12Z" fill="#f4e733" /><path d="M1,3L10,2L6,25Z" fill="#22d3a0" /></svg>
          <span className="relative flex h-[20px] w-[19px] flex-col bg-black pl-px pt-[2px] text-[9px] font-bold leading-[10px] tracking-[-0.500px] text-white">WS<span className="ml-[2px] mt-[2px] h-[1.500px] w-[7px] bg-white" /></span>
        </span>
      </Slot>
      <Slot className="ml-[11px] w-[51px] border-[#ffb3ae]">
        <svg className="h-[29px] w-[29px]" viewBox="0 0 29 29"><path d="M1,18Q1,8 13,6Q24,5 25,13Q25,18 19,18Q15,19 17,23Q16,28 9,27Q1,26 1,18Z" fill="#c9dfee" stroke="#7aa0bd" strokeWidth=".7" /><circle cx="7" cy="14" r="2.500" fill="#e8452f" /><circle cx="13" cy="10.500" r="2.300" fill="#3fae49" /><circle cx="19" cy="11" r="2.200" fill="#f2b631" /><circle cx="7" cy="21" r="2.200" fill="#3f8fe0" /><path d="M26,1L29,4L17,28L15,27Z" fill="#d98a3a" /><path d="M22,5L26,0L29,2L27,8Z" fill="#b9793c" /></svg>
      </Slot>
      <svg className="ml-auto mt-[6px] h-[40px] w-[38px] shrink-0" viewBox="0 0 38 40"><circle cx="13" cy="25" r="12" fill="#0a93dc" stroke="#fff" strokeWidth="2" /><path d="M8,21Q10,28 12,24M12,31H15V34H12Z" fill="#fff" stroke="#fff" /><rect x="11" y="1.500" width="26" height="26" rx="2" fill="#f58220" /><path d="M17,5H22V17H17ZM26,5H31V17H26ZM17,20H22V24H17ZM26,20H31V24H26Z" fill="#fff" /></svg>
      <svg className="ml-[11px] mt-[19px] h-[12px] w-[18px] shrink-0" viewBox="0 0 18 12" fill="none" stroke="#fff" strokeWidth="1.400"><path d="M1,10.500L9,2L17,10.500" /></svg>
      <svg className="ml-[23px] mt-[17px] h-[18px] w-[17px] shrink-0" viewBox="0 0 17 18" fill="none" stroke="#ddd" strokeWidth="1.200"><path d="M1,17Q1,2 16,1.500M4.500,17Q5,6 16,5.500M8,17Q9,9.500 16,9M11.500,17Q12,13 16,12.500" /><circle cx="14.500" cy="15.500" r="1.300" fill="#fff" /></svg>
      <svg className="ml-[21px] mt-[17px] h-[16px] w-[21px] shrink-0" viewBox="0 0 21 16" fill="none" stroke="#fff" strokeWidth="1.200"><path d="M6,3.500H19V13.500H5V8M19,6.500H20.500V10.500H19M1.500,0V3M4.500,0V3M1,3.500H5.500V6.500H1ZM3,6.500V10" /></svg>
      <svg className="ml-[24px] mt-[14px] h-[22px] w-[21px] shrink-0" viewBox="0 0 21 22" fill="none" stroke="#fff" strokeWidth="1.200"><path d="M8,18L9,12L14,2Q17,0 17,3L12,14L8,18M8,10Q1,11 1,16Q2,21 8,18M12,14Q17,6 20,8Q20,12 14,11" /></svg>
      <svg className="ml-[24px] mt-[17px] h-[17px] w-[30px] shrink-0" viewBox="0 0 30 17" fill="none" stroke="#fff" strokeWidth="1.200"><rect x="0.700" y="0.700" width="28.600" height="15.600" /><path d="M4,5H26M4,8.500H26" strokeDasharray="1.500 1.700" /><path d="M4,12.500H6M8,12.500H22M24,12.500H26" /></svg>
      <div className="ml-[20px] flex w-[62px] shrink-0 flex-col items-center pt-[3px] text-[14.500px] leading-[22.500px] tracking-[-0.400px] text-white"><span className="whitespace-nowrap">10:39 PM</span><span>2/1/2017</span></div>
      <svg className="ml-[26px] mt-[14px] h-[32px] w-[32px] shrink-0" viewBox="0 0 32 32"><path d="M1,1H21V17H13L9,21V17H1Z" fill="#fff" /><path d="M5,5.500H17M5,9H17M5,12.500H14" stroke="#22231f" strokeWidth="1.300" /><circle cx="20.500" cy="20.500" r="10" fill="#3a3b37" fillOpacity=".85" stroke="#888" /><text x="20.500" y="25" fontSize="13" textAnchor="middle" fill="#fff">1</text></svg>
      <div className="ml-[15px] mr-[4px] w-px shrink-0 bg-[#777]" />
    </footer>
  );
}

export default function App() {
  return (
    <div className="h-[1081px] w-[1927px] overflow-hidden bg-white">
      <div className="w-[1920px] overflow-hidden">
        <Browser />
        <Page />
        <Taskbar />
      </div>
    </div>
  );
}
